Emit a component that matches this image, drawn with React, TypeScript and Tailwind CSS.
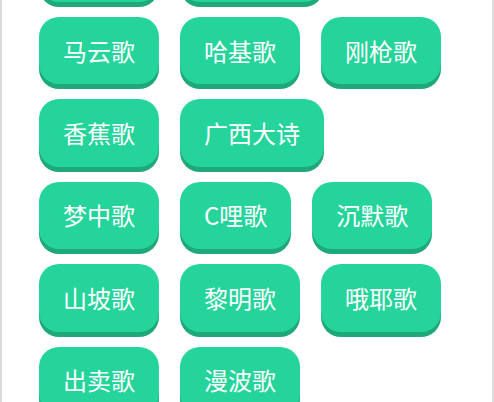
import React from 'react'

const ROWS: string[][] = [
  ['东北歌', '新疆大诗'],
  ['马云歌', '哈基歌', '刚枪歌'],
  ['香蕉歌', '广西大诗'],
  ['梦中歌', 'C哩歌', '沉默歌'],
  ['山坡歌', '黎明歌', '哦耶歌'],
  ['出卖歌', '漫波歌'],
]

function SongButton({ label }: { label: string }) {
  return (
    <button className="h-[67.4px] px-6 rounded-[20px] bg-[#25d49a] text-white text-[24px] leading-none shadow-[0_5px_0_#1fa87a] flex items-center justify-center whitespace-nowrap">
      {label}
    </button>
  )
}

export default function App() {
  return (
    <div
      className="h-[402px] w-[494px] overflow-hidden bg-white border-l-2 border-r-2 border-[#dcdcdc]"
      style={{ fontFamily: '"Noto Sans CJK SC", "Noto Sans", sans-serif' }}
    >
      <div className="-mt-[65.4px] pl-[37px] flex flex-col gap-[15px]">
        {ROWS.map((row, i) => (
          <div key={i} className="flex gap-[21px]">
            {row.map((label) => (
              <SongButton key={label} label={label} />
            ))}
          </div>
        ))}
      </div>
    </div>
  )
}
